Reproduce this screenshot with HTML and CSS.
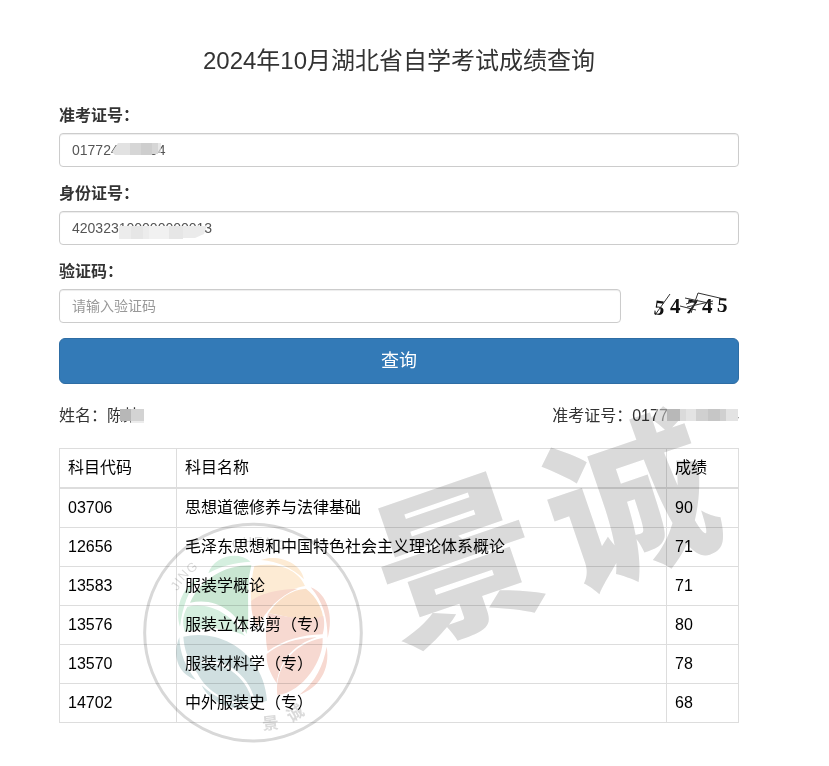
FILE: index.html
```
<!DOCTYPE html>
<html lang="zh-CN">
<head>
<meta charset="UTF-8">
<meta name="viewport" content="width=device-width, initial-scale=1">
<title>2024年10月湖北省自学考试成绩查询</title>
<link rel="stylesheet" href="styles.css">
</head>
<body>
    <main class="container">
        <h3 class="title">2024年10月湖北省自学考试成绩查询</h3>

        <form onsubmit="return false">
            <div class="form-group">
                <label for="zkzh">准考证号：</label>
                <input type="text" id="zkzh" class="form-control" value="017724000004">
                <svg class="mask mask-zkzh" width="49" height="12" viewBox="0 0 49 12">
                    <path fill="#e2e2e2" d="M0 9 6 0h12v12H3z"/>
                    <path fill="#d6d6d6" d="M18 0h11v12H18zM40 0h6v11h-6z"/>
                    <path fill="#cecece" d="M29 0h11v12H29z"/>
                    <path fill="#dedede" fill-opacity=".7" d="M46 0h3v10h-3z"/>
                </svg>
            </div>
            <div class="form-group">
                <label for="sfzh">身份证号：</label>
                <input type="text" id="sfzh" class="form-control" value="420323100000000013">
                <svg class="mask mask-sfzh" width="88" height="13" viewBox="0 0 88 13">
                    <path fill="#ececec" d="M0 0h30v13H0z"/>
                    <path fill="#e6e6e6" d="M12 0h12v13H12zM50 0h14v13H50z"/>
                    <path fill="#f1f1f1" d="M30 0h20v13H30z"/>
                    <path fill="#ebebeb" d="M64 0h24l-3 8-9 4H64z"/>
                </svg>
            </div>
            <div class="form-group">
                <label for="yzm">验证码：</label>
                <div class="captcha-row">
                    <input type="text" id="yzm" class="form-control" placeholder="请输入验证码">
                    <svg class="captcha" viewBox="0 0 80 34" role="img" aria-label="验证码">
                        <g class="captcha-text">
                            <text x="3" y="26" transform="rotate(8 9 20)">5</text>
                            <text x="19" y="24">4</text>
                            <text x="35" y="25" transform="rotate(12 41 18)">7</text>
                            <text x="51" y="24">4</text>
                            <text x="66" y="23" transform="rotate(4 72 18)">5</text>
                        </g>
                        <path class="captcha-line" d="M4 26 19 5M34 9l28 6M47 4l26 6M47 4l-7 20M29 17l16 4M36 18l26-6M35 15l12-4"/>
                    </svg>
                </div>
            </div>
            <button type="submit" class="btn">查询</button>
        </form>

        <section class="result">
            <div class="info">
                <span>姓名：陈某
                    <svg class="mask mask-name" width="24" height="14" viewBox="0 0 24 14">
                        <path fill="#b7b7b7" d="M0 0h11v12H0z"/>
                        <path fill="#d3d3d3" d="M11 0h13v12H11z"/>
                        <path fill="#ececec" d="M11 12h13v2H11z"/>
                    </svg>
                </span>
                <span>准考证号：017700000004
                    <svg class="mask mask-number" width="82" height="12" viewBox="0 0 82 12">
                        <path fill="#e3e3e3" fill-opacity=".5" d="M0 0h11v12H0z"/>
                        <path fill="#e3e3e3" d="M11 0h71v12H11z"/>
                        <path fill="#b8b8b8" d="M11 0h13v12H11z"/>
                        <path fill="#dadada" d="M24 0h6v12h-6z"/>
                        <path fill="#d0d0d0" d="M40 0h13v12H40zM64 0h6v12h-6z"/>
                        <path fill="#c6c6c6" d="M52 0h12v12H52z"/>
                    </svg>
                </span>
            </div>

            <table class="score">
                <thead>
                    <tr><th class="code">科目代码</th><th>科目名称</th><th class="mark">成绩</th></tr>
                </thead>
                <tbody>
                    <tr><td>03706</td><td>思想道德修养与法律基础</td><td>90</td></tr>
                    <tr><td>12656</td><td>毛泽东思想和中国特色社会主义理论体系概论</td><td>71</td></tr>
                    <tr><td>13583</td><td>服装学概论</td><td>71</td></tr>
                    <tr><td>13576</td><td>服装立体裁剪（专）</td><td>80</td></tr>
                    <tr><td>13570</td><td>服装材料学（专）</td><td>78</td></tr>
                    <tr><td>14702</td><td>中外服装史（专）</td><td>68</td></tr>
                </tbody>
            </table>

            <!-- 水印 -->
            <svg class="watermark" viewBox="59 404 680 346" aria-hidden="true">
                <g class="brand" transform="rotate(-19 461 561)">
                    <text x="457" y="620">景</text>
                    <text x="640" y="622">诚</text>
                </g>
                <g transform="translate(130 510) scale(.3333)">
                    <circle cx="369" cy="368" r="325" fill="none" stroke="#d8d8d8" stroke-width="9"/>
                    <g fill="#d5efdf">
                        <path d="M235 190C250 140 322 120 362 155 312 158 272 168 235 190z"/>
                        <path d="M208 204C150 235 135 300 150 350 158 290 175 240 208 204z"/>
                        <path d="M172 290C155 320 158 345 165 366 230 350 290 352 345 378 305 315 245 275 172 290z"/>
                    </g>
                    <path fill="#c9e6d2" d="M364 166C285 165 215 205 180 278 255 262 315 300 350 372 362 310 345 240 364 166z"/>
                    <g fill="#fdebd4">
                        <path d="M393 150C440 132 512 155 522 208 485 172 445 155 393 150z"/>
                        <path d="M373 168C445 155 505 180 525 228 465 238 410 285 382 345 355 280 360 225 373 168z"/>
                    </g>
                    <path fill="#f7d8cb" d="M364 272C400 245 455 238 503 236 445 258 410 300 382 352 368 325 362 300 364 272z"/>
                    <path fill="#fae0c8" d="M415 310C445 265 485 238 528 236 560 260 580 300 580 330 530 340 480 320 415 310z"/>
                    <g fill="#f7d9d1">
                        <path d="M542 232C592 250 612 320 593 384 592 325 580 275 542 232z"/>
                        <path d="M414 310C480 322 535 335 580 318 585 340 582 360 578 373 515 375 460 390 413 424 405 385 407 345 414 310z"/>
                        <path d="M578 384C582 450 520 545 442 556 432 480 485 400 578 384z"/>
                        <path d="M590 410C602 480 565 535 508 554 558 515 580 465 590 410z"/>
                        <path d="M410 432C450 400 500 384 560 382 490 405 450 450 440 520 420 490 408 460 410 432z"/>
                    </g>
                    <g fill="#d0dfe0">
                        <path d="M160 380C275 355 400 430 411 572 335 598 240 565 202 490 175 455 163 420 160 380z"/>
                        <path d="M148 382C128 430 138 490 198 510 165 470 150 430 148 382z"/>
                        <path d="M215 526C240 578 305 605 366 592 305 585 255 565 215 526z"/>
                    </g>
                    <path fill="none" stroke="#fff" stroke-width="8" d="M213 455C290 450 360 500 375 592"/>
                    <g class="ring-text">
                        <text transform="translate(142 244) rotate(-57)">J</text>
                        <text transform="translate(152 225) rotate(-52)">I</text>
                        <text transform="translate(160 214) rotate(-47)">N</text>
                        <text transform="translate(182 192) rotate(-40)">G</text>
                        <text x="306" y="114">C</text>
                        <text x="338" y="109">H</text>
                        <text x="372" y="107">E</text>
                        <text transform="translate(404 108) rotate(8)">N</text>
                        <text transform="translate(438 113) rotate(14)">G</text>
                        <text class="cn" transform="translate(398 660) rotate(-6)">景</text>
                        <text class="cn" transform="translate(484 638) rotate(-32)">诚</text>
                    </g>
                </g>
            </svg>
        </section>
    </main>
</body>
</html>
```

FILE: styles.css
```
* {
    box-sizing: border-box;
}
body {
    margin: 0;
    background-color: #fff;
    color: #333;
    font-family: "Liberation Sans", "Noto Sans CJK SC", sans-serif;
    font-size: 16px;
    line-height: 24px;
}
.container {
    padding: 48px 90px 40px 59px;
}
.title {
    margin: 0 0 30px;
    font-size: 24px;
    font-weight: normal;
    line-height: 26px;
    text-align: center;
}

/* Form */
.form-group {
    position: relative;
    margin-bottom: 15px;
}
.form-group label {
    display: block;
    margin-bottom: 5px;
    font-weight: bold;
}
.form-control {
    display: block;
    width: 100%;
    height: 34px;
    padding: 6px 12px;
    border: 1px solid #ccc;
    border-radius: 4px;
    background-color: #fff;
    box-shadow: inset 0 1px 1px rgba(0,0,0,0.075);
    color: #555;
    font-family: inherit;
    font-size: 14px;
    line-height: 20px;
}
.form-control::placeholder {
    color: #999;
    opacity: 1;
}
.captcha-row {
    display: flex;
    gap: 30px;
    padding-right: 8px;
}
.captcha-row .form-control {
    flex: 1;
    min-width: 0;
}
.captcha {
    flex: none;
    width: 80px;
    height: 34px;
}
.captcha-text {
    font-family: "Liberation Serif", serif;
    font-size: 21px;
    font-weight: bold;
    fill: #111;
}
.captcha-line {
    fill: none;
    stroke: #333;
    stroke-width: 1;
}
.btn {
    display: block;
    width: 100%;
    height: 46px;
    border: 1px solid #2e6da4;
    border-radius: 6px;
    background-color: #337ab7;
    color: #fff;
    font-family: inherit;
    font-size: 18px;
    line-height: 24px;
    cursor: pointer;
}
.btn:hover {
    background-color: #286090;
}

/* Hidden digits */
.mask {
    position: absolute;
    z-index: 1;
}
.mask-zkzh {
    left: 53px;
    top: 39px;
}
.mask-sfzh {
    left: 60px;
    top: 44px;
}
.mask-name {
    right: -5px;
    top: 5px;
}
.mask-number {
    right: 1px;
    top: 5px;
}

/* Result */
.result {
    position: relative;
    margin-top: 20px;
}
.info {
    display: flex;
    justify-content: space-between;
    margin-bottom: 20px;
}
.info span {
    position: relative;
}
.score {
    width: 100%;
    border-collapse: collapse;
    color: #000;
    line-height: 22px;
}
.score th,
.score td {
    padding: 8px;
    border: 1px solid #ddd;
    font-weight: normal;
    text-align: left;
}
.score th {
    border-bottom-width: 2px;
}
.score .code {
    width: 117px;
}
.score .mark {
    width: 72px;
}
.watermark {
    position: absolute;
    top: 0;
    left: 0;
    width: 100%;
    overflow: visible;
    mix-blend-mode: multiply;
    pointer-events: none;
}
.brand {
    font-family: "Noto Sans CJK SC", sans-serif;
    font-size: 164px;
    font-weight: 900;
    text-anchor: middle;
    fill: #dadada;
}
.ring-text {
    font-size: 38px;
    fill: #dadada;
}
.ring-text .cn {
    font-family: "Noto Sans CJK SC", sans-serif;
    font-size: 50px;
    font-weight: bold;
}
```
